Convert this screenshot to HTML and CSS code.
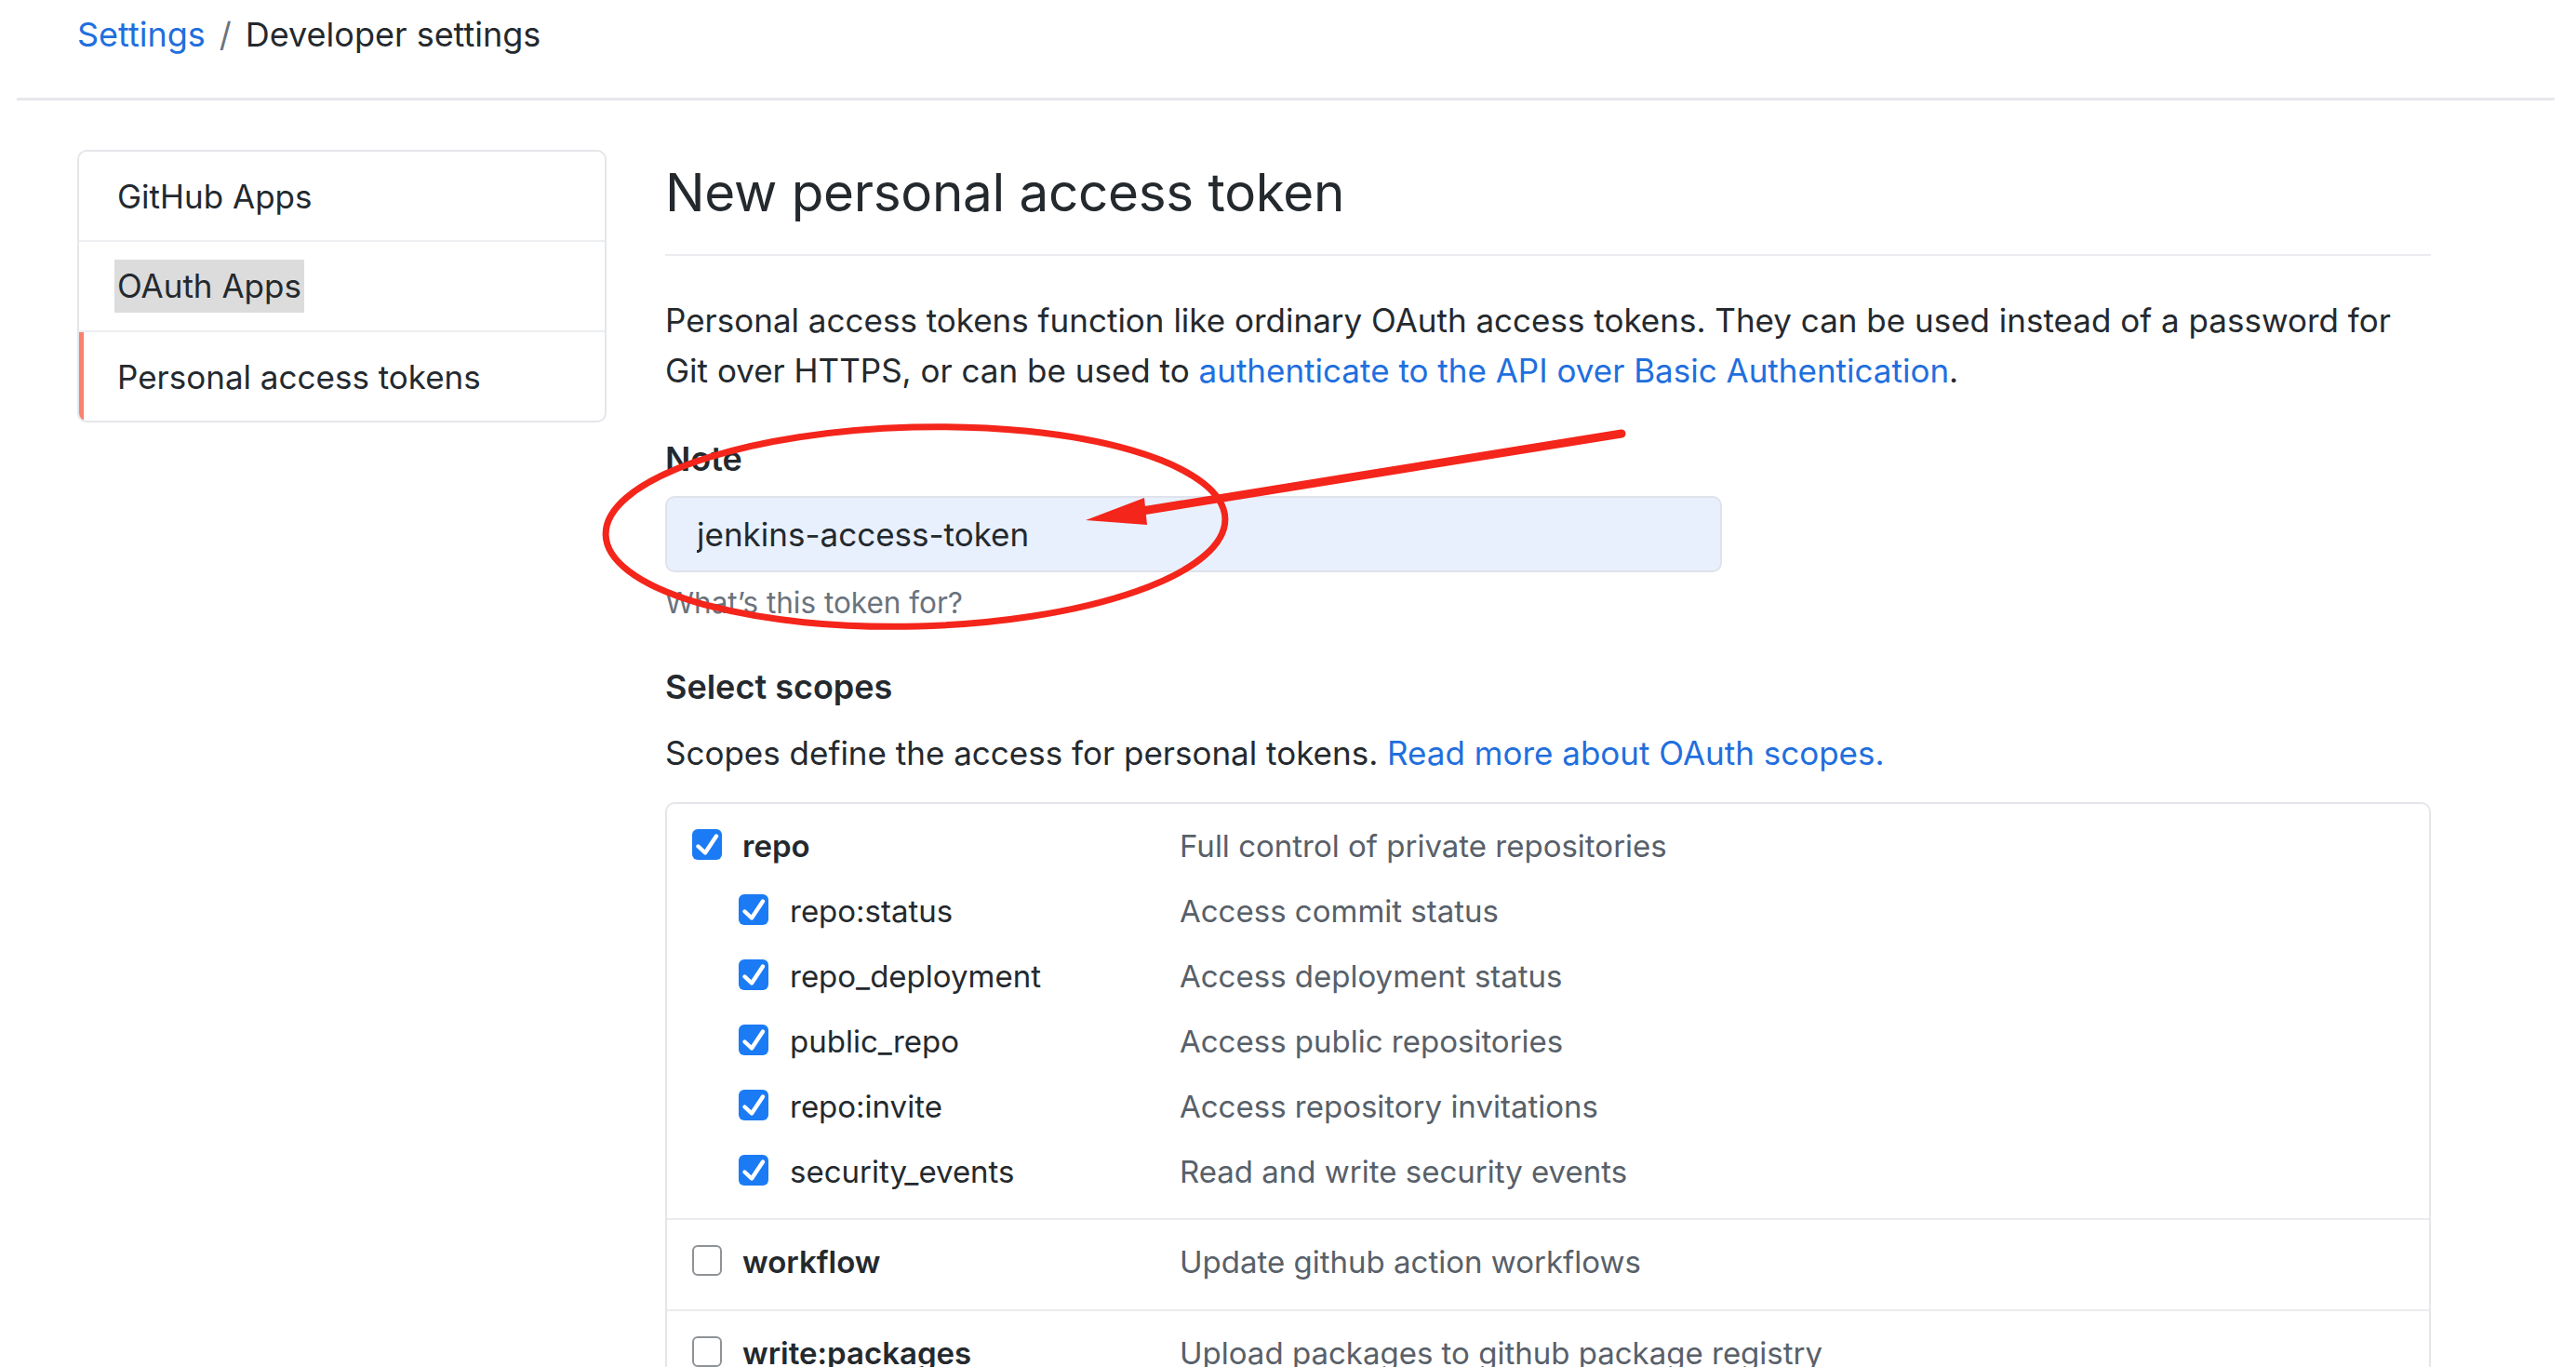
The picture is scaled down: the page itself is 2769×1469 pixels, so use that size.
FILE: index.html
```html
<!DOCTYPE html>
<html lang="en">
<head>
<meta charset="utf-8">
<title>New personal access token</title>
<link rel="stylesheet" href="styles.css">
</head>
<body>
<div class="page">
  <header class="topbar">
    <nav class="crumbs">
      <a class="crumb-link" href="#">Settings</a><span class="sep">/</span><span class="crumb-current">Developer settings</span>
    </nav>
  </header>

  <div class="layout">
    <aside class="sidenav">
      <div class="nav-item">GitHub Apps</div>
      <div class="nav-item"><span class="hl">OAuth Apps</span></div>
      <div class="nav-item selected">Personal access tokens</div>
    </aside>

    <main class="content">
      <h1 class="title">New personal access token</h1>
      <p class="intro">Personal access tokens function like ordinary OAuth access tokens. They can be used instead of a password for<br>Git over HTTPS, or can be used to <a href="#">authenticate to the API over Basic Authentication</a>.</p>

      <div class="field">
        <label class="field-label" for="note">Note</label>
        <input class="text-input" id="note" type="text" value="jenkins-access-token" readonly>
        <p class="hint">What’s this token for?</p>
      </div>

      <h2 class="section-label">Select scopes</h2>
      <p class="scope-desc">Scopes define the access for personal tokens. <a href="#">Read more about OAuth scopes.</a></p>

      <div class="scopes">
        <div class="group">
          <div class="scope-row parent">
            <div class="name"><span class="cb checked"><svg viewBox="0 0 32 33"><path d="M6.5 18.5 L14 25.5 L26 7.5"/></svg></span><span class="label">repo</span></div>
            <div class="desc">Full control of private repositories</div>
          </div>
          <div class="scope-row sub">
            <div class="name"><span class="cb checked"><svg viewBox="0 0 32 33"><path d="M6.5 18.5 L14 25.5 L26 7.5"/></svg></span><span class="label">repo:status</span></div>
            <div class="desc">Access commit status</div>
          </div>
          <div class="scope-row sub">
            <div class="name"><span class="cb checked"><svg viewBox="0 0 32 33"><path d="M6.5 18.5 L14 25.5 L26 7.5"/></svg></span><span class="label">repo_deployment</span></div>
            <div class="desc">Access deployment status</div>
          </div>
          <div class="scope-row sub">
            <div class="name"><span class="cb checked"><svg viewBox="0 0 32 33"><path d="M6.5 18.5 L14 25.5 L26 7.5"/></svg></span><span class="label">public_repo</span></div>
            <div class="desc">Access public repositories</div>
          </div>
          <div class="scope-row sub">
            <div class="name"><span class="cb checked"><svg viewBox="0 0 32 33"><path d="M6.5 18.5 L14 25.5 L26 7.5"/></svg></span><span class="label">repo:invite</span></div>
            <div class="desc">Access repository invitations</div>
          </div>
          <div class="scope-row sub">
            <div class="name"><span class="cb checked"><svg viewBox="0 0 32 33"><path d="M6.5 18.5 L14 25.5 L26 7.5"/></svg></span><span class="label">security_events</span></div>
            <div class="desc">Read and write security events</div>
          </div>
        </div>
        <div class="group">
          <div class="scope-row parent">
            <div class="name"><span class="cb"></span><span class="label">workflow</span></div>
            <div class="desc">Update github action workflows</div>
          </div>
        </div>
        <div class="group">
          <div class="scope-row parent">
            <div class="name"><span class="cb"></span><span class="label">write:packages</span></div>
            <div class="desc">Upload packages to github package registry</div>
          </div>
        </div>
      </div>
    </main>
  </div>

  <svg class="annotation" width="2769" height="1469" viewBox="0 0 2769 1469">
    <ellipse cx="984" cy="566" rx="333" ry="107" fill="none" stroke="#f4251b" stroke-width="7" transform="rotate(-1.5 984 566)"/>
    <line x1="1743" y1="466" x2="1228" y2="549" stroke="#f4251b" stroke-width="9" stroke-linecap="round"/>
    <polygon points="1167,559 1230,535 1233,564" fill="#f4251b"/>
  </svg>
</div>
</body>
</html>
```

FILE: styles.css
```css
html, body {
  margin: 0;
  padding: 0;
  background: #ffffff;
  overflow: hidden;
}

body {
  font-family: Inter, "Noto Sans", "Liberation Sans", sans-serif;
  color: #24292e;
  font-size: 35px;
}

a {
  color: #1f6fde;
  text-decoration: none;
}

.page {
  position: relative;
  width: 2769px;
  height: 1469px;
  overflow: hidden;
}

/* ---------- breadcrumb bar ---------- */
.topbar {
  margin: 0 23px 0 18px;
  padding: 10px 0 41px 65px;
  border-bottom: 3px solid #e7e8ec;
}

.crumbs {
  font-size: 36px;
  line-height: 54px;
}

.sep {
  color: #6a737d;
  margin: 0 15px;
}

.crumb-current {
  color: #24292e;
}

/* ---------- two-column layout ---------- */
.layout {
  display: flex;
  align-items: flex-start;
  padding-left: 83px;
  margin-top: 53px;
}

.sidenav {
  width: 565px;
  flex: none;
  border: 2px solid #e4e6ea;
  border-radius: 10px;
  overflow: hidden;
}

.nav-item {
  height: 95px;
  display: flex;
  align-items: center;
  padding-left: 41px;
  font-size: 35px;
  border-top: 2px solid #eceef1;
}

.nav-item:first-child {
  border-top: none;
}

.nav-item.selected {
  box-shadow: inset 5px 0 0 #f9826c;
}

.hl {
  display: inline-block;
  background: #dcdcdc;
  line-height: 57px;
  padding: 0 3px;
  margin-left: -3px;
}

.content {
  margin-left: 63px;
  width: 1898px;
  flex: none;
}

.title {
  margin: 10px 0 0;
  font-size: 56.6px;
  font-weight: 400;
  line-height: 72px;
  padding-bottom: 30px;
  border-bottom: 2px solid #eaecef;
  letter-spacing: -0.3px;
}

.intro {
  margin: 42px 0 0;
  font-size: 35px;
  line-height: 54px;
  white-space: nowrap;
}

.field-label {
  display: block;
  margin-top: 41px;
  font-size: 36px;
  font-weight: 600;
  line-height: 54px;
}

.text-input {
  display: block;
  margin: 13px 0 0;
  width: 1136px;
  height: 82px;
  box-sizing: border-box;
  border: 2px solid #dfe3ea;
  border-radius: 10px;
  background: #e8f0fe;
  padding: 0 0 0 32px;
  font-family: Inter, "Noto Sans", "Liberation Sans", sans-serif;
  font-size: 35px;
  color: #24292e;
  outline: none;
}

.hint {
  margin: 11px 0 0;
  font-size: 31.5px;
  line-height: 44px;
  color: #6a737d;
}

.section-label {
  margin: 41px 0 0;
  font-size: 36px;
  font-weight: 600;
  line-height: 54px;
}

.scope-desc {
  margin: 17px 0 0;
  font-size: 35px;
  line-height: 54px;
}

/* ---------- scopes box ---------- */
.scopes {
  margin-top: 26px;
  border: 2px solid #e4e6ea;
  border-radius: 10px;
  font-size: 33px;
}

.group {
  padding: 10px 0 15px;
}

.group + .group {
  border-top: 2px solid #eaecef;
  padding-bottom: 16px;
}

.scope-row {
  display: grid;
  grid-template-columns: 524px 1fr;
  align-items: center;
  height: 70px;
  padding-left: 27px;
}

.name {
  display: flex;
  align-items: center;
  gap: 22px;
}

.sub .name {
  padding-left: 50px;
  gap: 23px;
}

.parent .label {
  font-weight: 600;
}

.desc {
  color: #586069;
}

.cb {
  width: 32px;
  height: 33px;
  box-sizing: border-box;
  border-radius: 6px;
  border: 2px solid #8f9296;
  background: #ffffff;
  flex: none;
  margin-top: -4px;
}

.cb.checked {
  border: none;
  background: #1b7bf5;
}

.cb svg {
  display: block;
  width: 32px;
  height: 33px;
  fill: none;
  stroke: #ffffff;
  stroke-width: 4.4;
  stroke-linecap: round;
  stroke-linejoin: round;
}

/* ---------- annotation overlay ---------- */
.annotation {
  position: absolute;
  left: 0;
  top: 0;
  pointer-events: none;
}
```
